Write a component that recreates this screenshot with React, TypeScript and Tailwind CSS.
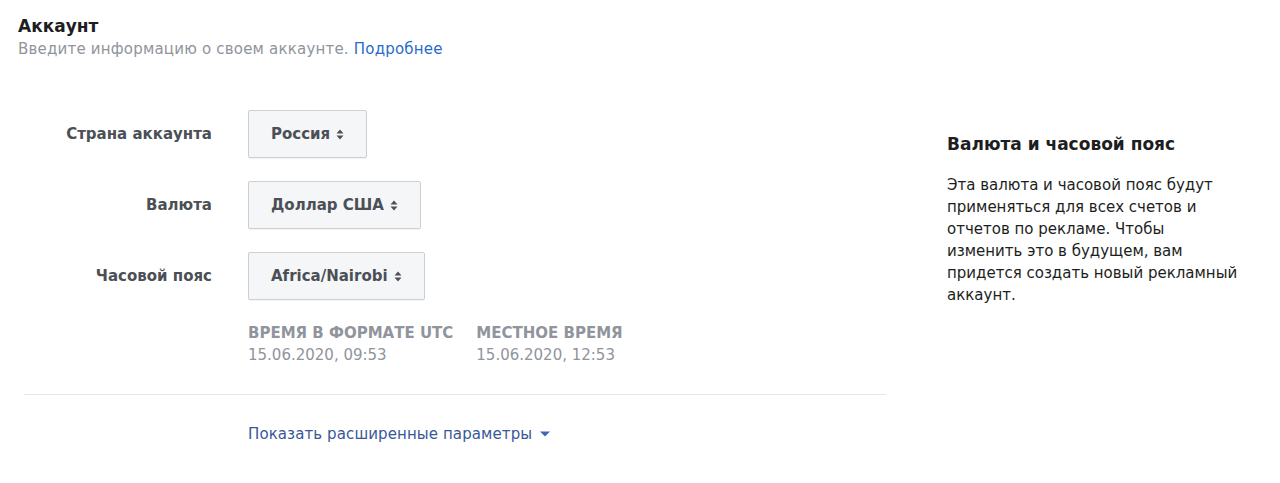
import React from 'react';

const font = { fontFamily: '"DejaVu Sans", "Liberation Sans", Arial, sans-serif' };

function SortIcon() {
  return (
    <svg width="8" height="11" viewBox="0 0 8 11" className="ml-[6px] shrink-0" fill="#4b4f56">
      <path d="M4 0.5 L7.5 4.5 H0.5 Z" />
      <path d="M4 10.5 L7.5 6.5 H0.5 Z" />
    </svg>
  );
}

function SelectRow({ label, value }: { label: string; value: string }) {
  return (
    <div className="flex items-center h-12">
      <div className="w-[194px] text-right text-[15px] font-bold text-[#4b4f56]">{label}</div>
      <button className="ml-[36px] h-12 px-[22px] flex items-center rounded-[2px] border border-[#ccd0d5] bg-[#f5f6f7] shadow-[0_1px_1px_rgba(0,0,0,0.05)] text-[15px] font-bold text-[#4b4f56]">
        {value}
        <SortIcon />
      </button>
    </div>
  );
}

export default function App() {
  return (
    <div className="w-[1280px] h-[483px] bg-white px-[18px] pt-[14px]" style={font}>
      <h1 className="text-[17px] leading-6 font-bold text-[#1c1e21]">Аккаунт</h1>
      <p className="mt-px text-[15px] leading-5 tracking-[0.2px] text-[#90949c]">
        Введите информацию о своем аккаунте. <a className="text-[#2a6bc9]">Подробнее</a>
      </p>

      <div className="flex">
        <div className="w-[868px] pt-[51px]">
          <div className="flex flex-col gap-[23px]">
            <SelectRow label="Страна аккаунта" value="Россия" />
            <SelectRow label="Валюта" value="Доллар США" />
            <SelectRow label="Часовой пояс" value="Africa/Nairobi" />
          </div>

          <div className="ml-[230px] mt-[22px] flex gap-[23px] text-[15px] leading-[22px] text-[#90949c]">
            <div>
              <div className="font-bold uppercase">Время в формате UTC</div>
              <div>15.06.2020, 09:53</div>
            </div>
            <div>
              <div className="font-bold uppercase">Местное время</div>
              <div>15.06.2020, 12:53</div>
            </div>
          </div>

          <div className="ml-[6px] mt-[28px] h-px bg-[#e5e6e8]" />

          <div className="ml-[230px] mt-[29px] flex items-center text-[15px] leading-5 tracking-[0.1px] text-[#385898]">
            Показать расширенные параметры
            <svg width="10" height="6" viewBox="0 0 10 6" className="ml-[8px]" fill="#4267b2">
              <path d="M0 0.5 H10 L5 5.5 Z" />
            </svg>
          </div>
        </div>

        <div className="ml-[61px] w-[296px] pt-[73px]">
          <h2 className="text-[17px] leading-6 font-bold text-[#1c1e21]">Валюта и часовой пояс</h2>
          <p className="mt-[18px] text-[15px] leading-[22px] text-[#1c1e21]">
            Эта валюта и часовой пояс будут применяться для всех счетов и отчетов по рекламе. Чтобы изменить это в будущем, вам придется создать новый рекламный аккаунт.
          </p>
        </div>
      </div>
    </div>
  );
}
